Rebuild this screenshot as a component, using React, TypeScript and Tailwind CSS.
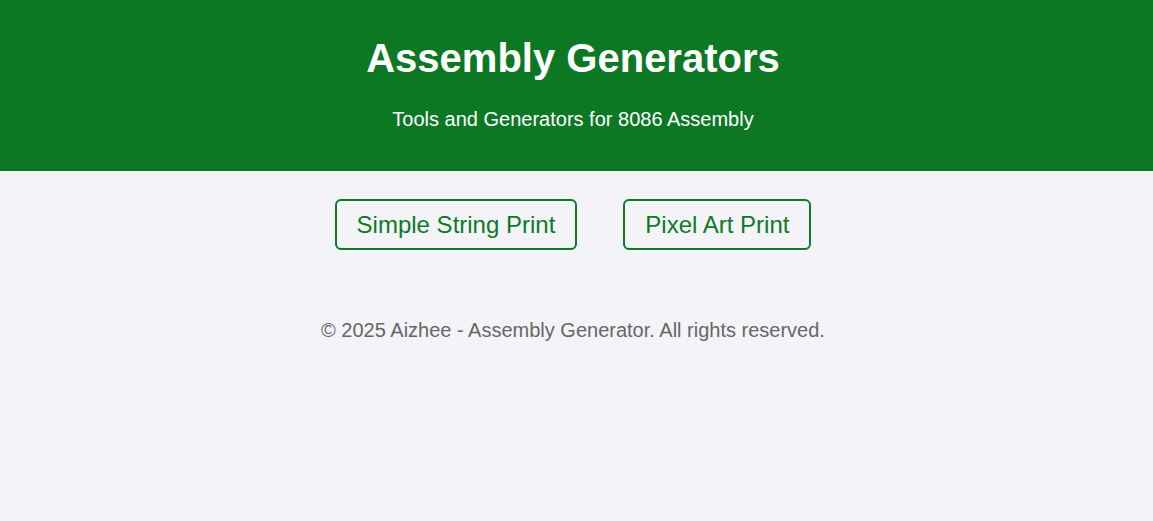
import React from "react";

function App() {
  return (
    <div className="min-h-screen bg-[#f4f4f8] font-['Liberation_Sans',Arial,sans-serif]">
      <header className="bg-[#0c7824] pt-[35px] pr-[7px] pb-[40px] text-center text-white">
        <h1 className="text-[40px] leading-[46px] font-bold">Assembly Generators</h1>
        <p className="mt-[27px] text-[20px] leading-[23px]">
          Tools and Generators for 8086 Assembly
        </p>
      </header>
      <main className="flex flex-col items-center pt-[28px] pr-[7px]">
        <div className="flex gap-[46px]">
          <a
            href="#"
            className="flex h-[51px] items-center rounded-md border-2 border-[#0c7a27] px-5 pt-px text-[24px] text-[#0c7a27]"
          >
            Simple String Print
          </a>
          <a
            href="#"
            className="flex h-[51px] items-center rounded-md border-2 border-[#0c7a27] px-5 pt-px text-[24px] text-[#0c7a27]"
          >
            Pixel Art Print
          </a>
        </div>
        <footer className="mt-[69px] text-[20px] leading-[23px] text-[#666666]">
          © 2025 Aizhee - Assembly Generator. All rights reserved.
        </footer>
      </main>
    </div>
  );
}

export default App;
